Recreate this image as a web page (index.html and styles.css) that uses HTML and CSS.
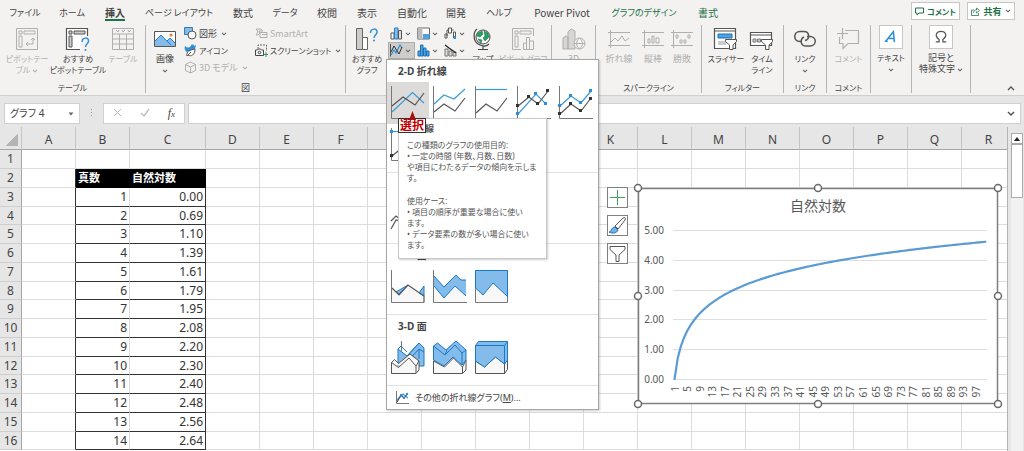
FILE: index.html
```html
<!DOCTYPE html>
<html lang="ja">
<head>
<meta charset="utf-8">
<title>グラフ 4</title>
<link rel="stylesheet" href="styles.css">
</head>
<body>
<svg class="defs" aria-hidden="true">
  <symbol id="chev" viewBox="0 0 6 4"><path d="M1 .8l2 2 2-2" fill="none" stroke="currentColor" stroke-width="1.1"/></symbol>
</svg>
<div class="app">
<header class="ribbon">
  <div class="topline">
    <nav class="tabs">
      <button class="kana">ファイル</button><button class="kana">ホーム</button><button class="active">挿入</button><button class="kana">ページ レイアウト</button><button>数式</button><button class="kana">データ</button><button>校閲</button><button>表示</button><button>自動化</button><button>開発</button><button class="kana">ヘルプ</button><button>Power Pivot</button><button class="context kana">グラフのデザイン</button><button class="context">書式</button>
    </nav>
    <div class="actions">
      <button class="kana"><svg width="9" height="9" viewBox="0 0 9 9"><path d="M.5 1h8v5H4L2 8V6H.5z" fill="none" stroke="currentColor"/></svg>コメント</button>
      <button><svg width="9" height="9" viewBox="0 0 9 9"><path d="M3 3H.5v5.500h7V6M2.500 6c0-2 1-3 3-3V1L8.500 3.500 5.500 6V4.500" fill="none" stroke="currentColor" stroke-width=".8"/></svg>共有 <svg class="chev"><use href="#chev"/></svg></button>
    </div>
  </div>
  <div class="groups">
    <section class="group g-table">
      <div class="tools">
        <button class="big kana" disabled><svg width="22" height="22" viewBox="0 0 22 22"><g fill="none" stroke="currentColor"><path d="M.5.5h21v21H.5zM3 3h3v3H3zM8 3h11v3H8zM3 8h3v11H3z"/><path d="M10 16h7v-6m-2 2 2-2 2 2m-7 2-2 2 2 2"/></g></svg><span>ピボットテー<br>ブル <svg class="chev"><use href="#chev"/></svg></span></button>
        <button class="big kana"><svg width="24" height="22" viewBox="0 0 24 22"><path d="M.5.5h21v21H.5z" fill="#fff"/><path d="M3 3h3v3H3zM8 3h11v3H8zM3 8h3v11H3z" fill="#ccc" stroke="#555"/><path d="M14 21.500H.5V.5h21V8" fill="none" stroke="#555" stroke-width="1.200"/><path d="M15 8h7v14h-7z" fill="#f3f2f1"/><path d="M16 14c0-5 7-5 6.500-1 0 3-3 3-3 6" fill="none" stroke="#2e8fd6" stroke-width="1.500"/><circle cx="19.500" cy="22" r="1" fill="#2e8fd6"/></svg><span>おすすめ<br>ピボットテーブル</span></button>
        <button class="big kana" disabled><svg width="22" height="22" viewBox="0 0 22 22"><path d="M.5.500h21v21H.5zM.5 6h21M.5 11h21M.5 16h21M7.500 6v15M14.500 6v15M4 2l2 2 1-2M10 2l1 2 2-2M16 2l1 2 2-2" fill="none" stroke="currentColor"/></svg><span>テーブル</span></button>
      </div>
      <h2>テーブル</h2>
    </section>
    <section class="group g-pict">
      <div class="tools">
        <button class="big"><svg width="22" height="22" viewBox="0 0 22 22"><path d="M.5 3.500h21v15H.5z" fill="#fff" stroke="#555"/><path d="M1 13l6-6 6 6 3-3 5 5v3H1z" fill="#83bbea"/><path d="M1 13l6-6 10 10m-4-4 3-3 5 5" fill="none" stroke="#2e7fbf"/><circle cx="17" cy="7" r="1.500" fill="#e8762c"/></svg><span>画像<br><svg class="chev"><use href="#chev"/></svg></span></button>
        <div class="small-list">
          <button><svg width="13" height="13" viewBox="0 0 13 13"><path d="M.5.5h8v7h-8z" fill="#83bbea" stroke="#2e7fbf"/><circle cx="8" cy="8" r="4" fill="#fff" stroke="#555"/></svg>図形 <svg class="chev"><use href="#chev"/></svg></button>
          <button class="kana"><svg width="13" height="13" viewBox="0 0 13 13"><path d="M1 2c2 2 4 2 6 0V1c2-1 3 0 3 1l2-1-1 4-4 3H3C1 7 0 5 1 2z" fill="#2e8fd6"/><path d="M3 12c-1-5 3-6 8-7 0 6-4 8-7 6zm0 0 4-4" fill="#fff" stroke="#555"/></svg>アイコン</button>
          <button disabled><svg width="13" height="13" viewBox="0 0 13 13"><path d="M6.500 1l5 2.500v6l-5 2.500-5-2.500v-6zM1.500 3.500l5 2.500 5-2.500M6.500 6v6" fill="none" stroke="currentColor"/></svg>3D モデル <svg class="chev"><use href="#chev"/></svg></button>
        </div>
        <div class="small-list">
          <button disabled><svg width="13" height="13" viewBox="0 0 13 13"><path d="M1 2h5l2 2H4l1 2-2 2H1l2-3zM5 5.500h7v5H5zM7 7.500h5" fill="none" stroke="currentColor"/></svg>SmartArt</button>
          <button class="kana"><svg width="13" height="13" viewBox="0 0 13 13"><path d="M3 5V1h8.500v6" fill="none" stroke="#666" stroke-dasharray="2 1"/><path d="M.5 6h2l1-1h2l1 1h2v5.500h-8z" fill="#fff" stroke="#444"/><circle cx="4.500" cy="8.500" r="1.300" fill="none" stroke="#444"/><path d="M11 8v5M8.800 10.500H13" stroke="#2e9b57"/></svg>スクリーンショット<svg class="chev"><use href="#chev"/></svg></button>
        </div>
      </div>
      <h2>図</h2>
    </section>
    <section class="group g-chart">
      <div class="tools">
        <button class="big kana"><svg width="22" height="22" viewBox="0 0 22 22"><path d="M.5.5h6v21h-6z" fill="#ccc" stroke="#666"/><path d="M6.500 9.500h5v12h-5z" fill="#fff" stroke="#666"/><path d="M14.500 5c0-5 7-5 6.500-1 0 3-3 3-3 6" fill="none" stroke="#2e8fd6" stroke-width="1.500"/><circle cx="18" cy="12.500" r="1" fill="#2e8fd6"/></svg><span>おすすめ<br>グラフ</span></button>
        <div class="chart-kinds">
          <button aria-label="縦棒"><svg width="13" height="13" viewBox="0 0 13 13"><path d="M1 6h3v6H1z" fill="#fff" stroke="#555"/><path d="M4.500 1h3.500v11H4.500z" fill="#83bbea" stroke="#2e7fbf"/><path d="M8.500 3.500h3V12h-3z" fill="#ddd" stroke="#555"/></svg><svg class="chev"><use href="#chev"/></svg></button>
          <button aria-label="階層"><svg width="13" height="13" viewBox="0 0 13 13"><path d="M.5 1h12v11H.5z" fill="#fff" stroke="#666"/><path d="M.5 1h5v11h-5z" fill="#bbb"/><path d="M6 7h6.500v5H6z" fill="#4fa3e0"/></svg><svg class="chev"><use href="#chev"/></svg></button>
          <button aria-label="ウォーターフォール"><svg width="13" height="13" viewBox="0 0 13 13"><path d="M1 7h2v4H1zM4.500 1h3v5h-3zM9.500 5h2v6h-2zM3 9V3h1.500M7.500 3h2" fill="#fff" stroke="#555"/><path d="M10 9h2v3h-2z" fill="#2e8fd6"/></svg><svg class="chev"><use href="#chev"/></svg></button>
          <button class="pressed" aria-label="折れ線"><svg width="13" height="13" viewBox="0 0 13 13"><path d="M.5 0v12.500" fill="none" stroke="#555"/><path d="M1 11l3-5 2 3 4-8 2 3" fill="none" stroke="#2e8fd6" stroke-width="1.200"/><path d="M1 8l3-6 5 8 3-7" fill="none" stroke="#333"/></svg><svg class="chev"><use href="#chev"/></svg></button>
          <button aria-label="統計"><svg width="13" height="13" viewBox="0 0 13 13"><path d="M1 7h2.500v5H1zM3.500 1H6v11H3.500zM6.500 4H9v8H6.500zM9.500 7H12v5H9.500z" fill="#4fa3e0" stroke="#1c6fb5"/></svg><svg class="chev"><use href="#chev"/></svg></button>
          <button aria-label="複合"><svg width="13" height="13" viewBox="0 0 13 13"><path d="M1 5h3v7H1zM5 7h3v5H5zM9 8h3v4H9z" fill="#ddd" stroke="#777"/><path d="M1 1l4 3 7 5" fill="none" stroke="#222" stroke-width="1.300"/></svg><svg class="chev"><use href="#chev"/></svg></button>
        </div>
        <button class="big kana"><svg width="22" height="22" viewBox="0 0 22 22"><circle cx="11" cy="9" r="7" fill="#fff" stroke="#444"/><path d="M6 5l4-2 1 3-3 3-3-1zM12 3l4 2 1 4-4 4-2-3 2-2zM6 11l4 1-1 3z" fill="#21a366" stroke="#217346" stroke-width=".6"/><path d="M5 1C1 4 1 13 6 16s9 2 11 0M11 18v3M6 21.500h10" fill="none" stroke="#444" stroke-width="1.200"/></svg><span>マップ</span></button>
        <button class="big kana" disabled><svg width="22" height="22" viewBox="0 0 22 22"><path d="M9 21.500H.5V.5h21V8M3 3h3v3H3zM8 3h11v3H8zM3 8h3v11H3zM11.500 15h3v6.500h-3zM14.500 9.500h3v12h-3zM17.500 13h4v8.500h-4z" fill="none" stroke="currentColor"/></svg><span>ピボットグラフ</span></button>
      </div>
    </section>
    <section class="group g-3d">
      <div class="tools">
        <button class="big" disabled><svg width="24" height="22" viewBox="0 0 24 22"><path d="M1 10l3-2 2 1v12H1zM6 4l3-3 4 2v18H6z" fill="#d8d6d4" stroke="currentColor"/><circle cx="17.500" cy="15.500" r="5.500" fill="#f3f2f1" stroke="currentColor"/><path d="M12 15.500h11M17.500 10c-4 4-4 7 0 11 4-4 4-7 0-11" fill="none" stroke="currentColor"/></svg><span>3D</span></button>
      </div>
    </section>
    <section class="group g-spark">
      <div class="tools">
        <button class="big" disabled><svg width="22" height="22" viewBox="0 0 22 22"><path d="M0 4.500h22M0 17.500h22M2.500 2v18M3 14l4-4 3 3 4-5 3 5 4-3" fill="none" stroke="currentColor"/></svg><span>折れ線</span></button>
        <button class="big" disabled><svg width="22" height="22" viewBox="0 0 22 22"><path d="M0 4.500h22M0 17.500h22M2.500 2v18M6 11h2v4H6zM10 8h2v7h-2zM14 10h3v5h-3z" fill="none" stroke="currentColor"/></svg><span>縦棒</span></button>
        <button class="big" disabled><svg width="22" height="22" viewBox="0 0 22 22"><path d="M0 4.500h22M0 17.500h22M2.500 2v18M5 7h2v3H5zM9 12h2v3H9zM13 12h2v3h-2zM17 7h2v3h-2z" fill="none" stroke="currentColor"/></svg><span>勝敗</span></button>
      </div>
      <h2>スパークライン</h2>
    </section>
    <section class="group g-filter">
      <div class="tools">
        <button class="big kana"><svg width="24" height="22" viewBox="0 0 24 22"><path d="M.5.500h21v20H.5zM.5 3h21" fill="#fff" stroke="#555" stroke-width="1.200"/><path d="M4 6h14v4H4z" fill="#4fa3e0" stroke="#1c6fb5"/><path d="M4 13h8v4H4z" fill="#ccc"/><path d="M11.500 11.500h11v2L19 17v4.500h-3.500V17l-4-3.500z" fill="#fff" stroke="#555"/></svg><span>スライサー</span></button>
        <button class="big kana"><svg width="24" height="22" viewBox="0 0 24 22"><path d="M.5 4.500h21v13H.5zM.5 7h21" fill="#fff" stroke="#555" stroke-width="1.200"/><path d="M3 11h3v3H3zM7.500 11h3v3h-3z" fill="#ccc" stroke="#777"/><path d="M11.500 11.500h11v2L19 17v4.500h-3.500V17l-4-3.500z" fill="#fff" stroke="#555"/></svg><span>タイム<br>ライン</span></button>
      </div>
      <h2>フィルター</h2>
    </section>
    <section class="group g-link">
      <div class="tools">
        <button class="big kana"><svg width="22" height="22" viewBox="0 0 22 22"><path d="M8 13.500H6C-1 13.500-1 3.500 6 3.500h4c6 0 6 8 1 9M13 8.500h3c7 0 7 9.500 0 9.500h-4c-6 0-6-7-2-9" fill="none" stroke="#555" stroke-width="1.500"/></svg><span>リンク<br><svg class="chev"><use href="#chev"/></svg></span></button>
      </div>
      <h2>リンク</h2>
    </section>
    <section class="group g-comment">
      <div class="tools">
        <button class="big kana" disabled><svg width="22" height="22" viewBox="0 0 22 22"><path d="M8 2.500h13.500v13H11l-5 5v-5H2.500V9M5.500 0v11M0 5.500h11" fill="none" stroke="currentColor" stroke-width="1.200"/></svg><span>コメント</span></button>
      </div>
      <h2>コメント</h2>
    </section>
    <section class="group g-text">
      <div class="tools">
        <button class="big kana boxed"><svg class="framed" width="24" height="24" viewBox="0 0 23 23"><path d="M6 16L14 6l1 11M9 13h6M5 16h3" fill="none" stroke="#2e8fd6" stroke-width="1.600"/></svg><span>テキスト<br><svg class="chev"><use href="#chev"/></svg></span></button>
      </div>
    </section>
    <section class="group g-symbol">
      <div class="tools">
        <button class="big boxed"><svg class="framed" width="24" height="24" viewBox="0 0 23 23"><path d="M6 16.500h3.500V14C4 10 7 5.500 11.500 5.500S19 10 13.500 14v2.500H17" fill="none" stroke="#555" stroke-width="1.300"/></svg><span>記号と<br>特殊文字 <svg class="chev"><use href="#chev"/></svg></span></button>
      </div>
    </section>
    <button class="collapse" aria-label="リボンを折りたたむ"><svg width="8" height="5" viewBox="0 0 8 5"><path d="M1 4l3-3 3 3" fill="none" stroke="#555" stroke-width="1.300"/></svg></button>
  </div>
</header>

<div class="formula-bar">
  <button class="name-box">グラフ 4<svg width="6" height="4" viewBox="0 0 6 4"><path d="M.5.500h5L3 3.500z" fill="#666"/></svg></button>
  <svg class="grip" width="3" height="9" viewBox="0 0 3 9"><path d="M1 0h1v1H1zM1 3h1v1H1zM1 6h1v1H1z" fill="#999"/></svg>
  <div class="fx">
    <button aria-label="キャンセル"><svg width="9" height="9" viewBox="0 0 9 9"><path d="M1 1l7 7M8 1L1 8" stroke="#bbb"/></svg></button>
    <button aria-label="入力"><svg width="10" height="9" viewBox="0 0 10 9"><path d="M1 5l3 3 5-7" fill="none" stroke="#bbb" stroke-width="1.300"/></svg></button>
    <button aria-label="関数の挿入"><i>f</i><i class="sub">x</i></button>
  </div>
  <label class="formula"><input type="text" aria-label="数式バー"><svg width="8" height="5" viewBox="0 0 8 5"><path d="M1 1l3 3 3-3" fill="none" stroke="#555" stroke-width="1.500"/></svg></label>
</div>

<main class="workspace">
  <div class="sheet">
    <table class="grid">
      <colgroup id="cols"></colgroup>
      <thead><tr id="head"></tr></thead>
      <tbody id="rows"></tbody>
    </table>
    <div class="chart-object">
      <div class="chart-tools">
        <button aria-label="グラフ要素"><svg width="19" height="19" viewBox="0 0 19 19"><path d="M9.500 2v15M2 9.500h15" stroke="#3fa45f"/></svg></button>
        <button aria-label="グラフ スタイル"><svg width="19" height="19" viewBox="0 0 19 19"><path d="M7 10l8-8c2-1 3 0 2 2l-7 9z" fill="#fff" stroke="#555"/><path d="M1 16c3 0 2-5 6-5l3 3c-1 3-5 4-9 2z" fill="#6fb1e8" stroke="#1c6fb5"/></svg></button>
        <button aria-label="グラフ フィルター"><svg width="19" height="19" viewBox="0 0 19 19"><path d="M2 2.500h15v3l-6 5.500v6.500H8V11L2 5.500z" fill="#fff" stroke="#555"/></svg></button>
      </div>
      <svg id="chart" class="chart" viewBox="0 0 360 216" role="img" aria-label="自然対数"></svg>
    </div>
  </div>
  <div class="scrollbar">
    <button aria-label="上へ"><svg width="6" height="4" viewBox="0 0 6 4"><path d="M0 4l3-4 3 4z" fill="#222"/></svg></button>
    <div class="thumb"></div>
  </div>
</main>

<div class="menu" role="menu">
  <section>
    <h3>2-D 折れ線</h3>
    <div class="gallery">
      <button class="selected"><svg width="34" height="34" viewBox="0 0 34 34"><path d="M.5 0v32.500H34" class="ax"/><path d="M1 26l20.500-19.500L33 17" class="bl"/><path d="M1 20l11-9 12 8 9-12" class="gl"/></svg></button>
      <button><svg width="34" height="34" viewBox="0 0 34 34"><path d="M.5 0v32.500H34" class="ax"/><path d="M1 18l10-9 10 4L32 3" class="bl"/><path d="M1 26l10-8 11 7 10-13" class="gl"/></svg></button>
      <button><svg width="34" height="34" viewBox="0 0 34 34"><path d="M.5 0v32.500H34" class="ax"/><path d="M1 3.500h31" class="bl"/><path d="M1 27l10-9 11 7 10-13" class="gl"/></svg></button>
      <button><svg width="34" height="34" viewBox="0 0 34 34"><path d="M.5 0v32.500H34" class="ax"/><path d="M1 28l18-20 10 10" class="bl"/><path d="M1 20l11-9 9 7L31 5" class="gl"/><path d="M-1 26h3v3h-3zM17 6h3v3h-3zM27 16h3v3h-3z" fill="#2e8fd6"/><path d="M-1 18h3v3h-3zM10 9h3v3h-3zM19 16h3v3h-3zM29 3h3v3h-3z" fill="#333"/></svg></button>
      <button><svg width="34" height="34" viewBox="0 0 34 34"><path d="M.5 0v32.500H34" class="ax"/><path d="M1 20l11-10 10 7L32 5" class="bl"/><path d="M1 28l11-10 10 7 10-13" class="gl"/><path d="M-1 18h3v3h-3zM10 8h3v3h-3zM20 15h3v3h-3zM30 3h3v3h-3z" fill="#2e8fd6"/><path d="M-1 26h3v3h-3zM10 16h3v3h-3zM20 23h3v3h-3zM30 11h3v3h-3z" fill="#333"/></svg></button>
      <button><svg width="34" height="34" viewBox="0 0 34 34"><path d="M.5 0v32.500H34" class="ax"/><path d="M1 3.500h31" class="bl"/><path d="M1 28l11-9 10 7 10-13" class="gl"/><path d="M-1 2h3v3h-3z" fill="#2e8fd6"/><path d="M-1 26h3v3h-3z" fill="#333"/></svg></button>
    </div>
  </section>
  <section aria-label="3-D 折れ線">
    <h3></h3>
    <div class="gallery">
      <button><svg width="34" height="34" viewBox="0 0 34 34"><path d="M0 22l5-5 10 8 13-10v6L20 31 10 22 5 21 0 30" class="gl"/></svg></button>
    </div>
  </section>
  <section>
    <h3>2-D 面</h3>
    <div class="gallery">
      <button><svg width="34" height="34" viewBox="0 0 34 34"><path d="M1 18l7 7 9-10 16 11v6H1z" fill="#f8f8f8"/><path d="M5 22l12-7-9 9zM28 23l5-7v10z" class="area"/><path d="M1 18l7 7 9-10 16 11v6.500" class="gl"/><path d="M.5 0v32.500H33" class="ax"/></svg></button>
      <button><svg width="34" height="34" viewBox="0 0 34 34"><path d="M1 16l10 11 11-11 10 10v6H1z" fill="#f8f8f8"/><path d="M1 6l10 11L23 5l5 5h5v16L22 16 11 28 1 16z" fill="#83bbea"/><path d="M1 6l10 11L23 5l5 5h5M33 26L22 16 11 28 1 16" fill="none" stroke="#1c79c5"/><path d="M.5 0v32.500H34" class="ax"/></svg></button>
      <button><svg width="34" height="34" viewBox="0 0 34 34"><path d="M.5.500h32v32H.5z" fill="#f8f8f8" stroke="#777"/><path d="M.5.500h32v26L18 13 8 25l-7.500-7z" class="area"/></svg></button>
    </div>
  </section>
  <section>
    <h3>3-D 面</h3>
    <div class="gallery">
      <button><svg width="34" height="34" viewBox="0 0 34 34"><path d="M10.500 0v10" class="ax"/><path d="M7 8l9 7L28 2l5 5v18H7z" class="area"/><path d="M16 15L28 2M17 20L28 8l5 3M28 8v10M7 8l3-3 6 6" fill="none" stroke="#1c79c5"/><path d="M.5 21.500l3-3 4 4L19 13l9 7v9l-3 3.500H.5zM.5 21.500l7 5L18 17l7 8v7M25 25l3-5" fill="#f8f8f8" stroke="#555"/></svg></button>
      <button><svg width="34" height="34" viewBox="0 0 34 34"><path d="M.5 20l11 6 9-9 9 9 3.500-7v10l-3.500 3.500H.5zM29.500 26v6" fill="#f8f8f8" stroke="#555"/><path d="M.5 5l4-3L13 9l10-9 10 9v10l-4 5-9-8-9 9L.5 19z" class="area"/><path d="M.5 5L12 14l10-10 7 8v12M29 12l4-3M12 14l2-5" fill="none" stroke="#1c79c5"/></svg></button>
      <button><svg width="34" height="34" viewBox="0 0 34 34"><path d="M.5 20l9 6 11-10 9 7v9.500H.5zM29.500 32.500l3-4V17l-3 6z" fill="#f8f8f8" stroke="#555"/><path d="M.5 4.500l3-4h29V19l-3 4-9-7-11 10-9-6z" class="area"/><path d="M.5 4.500h29V23M29.500 4.500l3-4" fill="none" stroke="#1c79c5"/></svg></button>
    </div>
  </section>
  <button class="more"><svg width="13" height="13" viewBox="0 0 13 13"><path d="M.5 0v12.500H13" class="ax"/><path d="M1 9l6-6 5 4" class="bl"/><path d="M1 11l4-7 3 3 4-5" class="gl"/><path d="M4 3h2v2H4zM7 6h2v2H7zM10 2h2v2h-2z" fill="#2e8fd6"/></svg><span>その他の折れ線グラフ(<u>M</u>)...</span></button>
  <div class="tip" role="tooltip">
    <strong>折れ線</strong>
    <p>この種類のグラフの使用目的:<br>• 一定の時間 (年数、月数、日数)<br>や項目にわたるデータの傾向を示しま<br>す。</p>
    <p>使用ケース:<br>• 項目の順序が重要な場合に使い<br>ます。<br>• データ要素の数が多い場合に使い<br>ます。</p>
    <div class="callout"><svg width="7" height="9" viewBox="0 0 7 9"><path d="M3.500 0L7 9H0z" fill="#a80f0f"/></svg>選択</div>
  </div>
</div>
</div>
<script src="app.js"></script>
</body>
</html>
```

FILE: styles.css
```css
* { box-sizing: border-box; }
html, body { margin: 0; height: 100%; overflow: hidden; }
body {
  font-family: "Noto Sans", "Noto Sans CJK JP", sans-serif;
  font-size: 9px;
  line-height: 11px;
  color: #444;
  background: #e6e6e6;
}
button {
  font: inherit;
  color: inherit;
  background: none;
  border: 0;
  padding: 0;
  margin: 0;
  white-space: nowrap;
}
button:disabled { color: #b1afad; }
h2, h3, p { margin: 0; font-size: inherit; font-weight: 400; }
svg { flex: none; overflow: visible; }
.defs { position: absolute; width: 0; height: 0; }
.chev { width: 6px; height: 4px; vertical-align: middle; color: #666; }
:disabled .chev { color: #b1afad; }
.kana { font-size: 8px; }

.app { position: relative; display: flex; flex-direction: column; height: 100vh; }

.ribbon {
  background: #f3f2f1;
  border-bottom: 1px solid #d2d0ce;
  font-feature-settings: "palt";
  font-family: "Noto Sans CJK JP", sans-serif;
}
.topline { display: flex; justify-content: space-between; height: 25px; }
.tabs {
  display: grid;
  grid-template-columns: 46px 48px 38px 90px 38px 46px 38px 42px 48px 40px 46px 80px 84px 44px;
  padding-left: 2px;
  font-size: 10px;
}
.tabs button { display: flex; justify-content: center; align-items: center; }
.tabs .kana { font-size: 9px; }
.tabs .active {
  font-weight: 700;
  background: linear-gradient(#1e7145, #1e7145) center 19px / 20px 2px no-repeat;
}
.tabs .context { color: #217346; }
.actions { display: flex; gap: 7px; padding: 2px 9px 5px 0; }
.actions button {
  display: flex;
  justify-content: space-between;
  align-items: center;
  min-width: 48px;
  gap: 3px;
  padding: 0 3px;
  background: #fff;
  border: 1px solid #c8c6c4;
  color: #217346;
  font-weight: 700;
}

.groups { display: flex; height: 70px; padding-bottom: 2px; }
.group {
  display: flex;
  flex-direction: column;
  justify-content: space-between;
  flex: none;
  border-right: 1px solid #b8b6b4;
}
.group h2 { text-align: center; font-size: 8px; }
.group.g-pict h2 { font-size: 9px; }
.tools { display: grid; grid-auto-flow: column; justify-content: start; align-items: start; }
.big { display: flex; flex-direction: column; align-items: center; gap: 3px; padding-top: 3px; justify-self: center; }
.boxed { padding-top: 0; }
.framed { background: #fff; border: 1px solid #c8c6c4; }
.g-table { width: 146px; }
.g-table .tools { grid-template-columns: 54px 48px 42px; }
.g-pict { width: 200px; }
.g-pict .tools { grid-template-columns: 38px 71px 88px; }
.g-chart { width: 206px; }
.g-chart .tools { grid-template-columns: 42px 80px 30px 50px; }
.g-3d { width: 44px; }
.g-spark { width: 106px; }
.g-spark .tools { grid-template-columns: 42px 26px 32px; padding-left: 2px; }
.g-filter { width: 82px; }
.g-filter .tools { grid-template-columns: 48px 24px; }
.g-link { width: 43px; }
.g-comment { width: 44px; }
.g-text { width: 41px; }
.g-symbol { width: 59px; }
.g-3d .tools, .g-link .tools, .g-comment .tools, .g-text .tools, .g-symbol .tools { justify-content: center; }
.small-list { display: grid; grid-auto-rows: 17px; }
.small-list button { display: flex; align-items: center; gap: 2px; }
.small-list .chev { margin-left: 2px; }
.chart-kinds { display: grid; grid-template-columns: repeat(3, 27px); grid-auto-rows: 17px; }
.chart-kinds button { display: flex; align-items: center; gap: 2px; padding: 0 3px 0 2px; }
.chart-kinds .pressed { background: #cfcdcb; border: 1px solid #b0aeac; padding-left: 1px; }
.collapse { align-self: end; margin-left: auto; padding: 0 9px 0 0; }

.formula-bar {
  display: flex;
  align-items: center;
  padding: 7px 3px 3px 4px;
  height: 31px;
  font-size: 10px;
}
.formula-bar > * { height: 21px; }
.name-box {
  display: flex;
  align-items: center;
  justify-content: space-between;
  width: 76px;
  padding: 0 5px;
  background: #fff;
  border: 1px solid #d0d0d0;
  font-feature-settings: "palt";
}
.formula-bar > .grip { height: 9px; margin: 0 10px; }
.fx {
  display: flex;
  justify-content: space-around;
  align-items: center;
  width: 82px;
  margin-right: 3px;
  background: #fff;
  border: 1px solid #d0d0d0;
}
.fx i { font-family: "Liberation Serif", serif; font-size: 12px; }
.fx .sub { font-size: 9px; }
.formula {
  flex: 1;
  display: flex;
  align-items: center;
  padding-right: 5px;
  background: #fff;
  border: 1px solid #d0d0d0;
}
.formula input { flex: 1; min-width: 0; border: 0; outline: 0; background: none; font: inherit; }

.workspace { flex: 1; min-height: 0; display: flex; gap: 3px; padding-right: 1px; }
.sheet { flex: 1; min-width: 0; position: relative; overflow: hidden; background: #fff; border-right: 1px solid #b4b4b4; }
.grid {
  width: 1016px;
  table-layout: fixed;
  border-collapse: separate;
  border-spacing: 0;
  font-size: 12px;
  line-height: 16px;
}
.grid .col { width: 54px; }
.grid .col-row { width: 22px; }
.grid .col-wide { width: 76px; }
.grid th, .grid td {
  height: 19px;
  padding: 0 2px;
  border-right: 1px solid #dcdcdc;
  border-bottom: 1px solid #dcdcdc;
  text-align: right;
}
.grid tbody tr:nth-child(4n) > * { height: 18px; }
.grid th { background: #e6e6e6; font-weight: 400; text-align: center; }
.grid thead th { height: 23px; padding-top: 3px; border-right-color: #c4c4c4; border-bottom-color: #a6a6a6; }
.grid tbody th { border-right-color: #a6a6a6; border-bottom-color: #cfcfcf; }
.grid .corner { background: linear-gradient(135deg, transparent 50%, #b4b4b4 50%) right 3px bottom 3px / 12px 12px no-repeat #e6e6e6; }
.grid .edge { border-right-color: #333; }
.grid .value { border-bottom-color: #333; color: #333; }
.grid .title {
  background: #000;
  border-color: #000;
  color: #fff;
  font-size: 11px;
  font-weight: 700;
  text-align: left;
}

.chart-object { position: absolute; left: 638px; top: 61px; width: 360px; }
.chart { display: block; width: 100%; }
.chart text { fill: #595959; font-size: 10px; }
.chart .chart-title { font-size: 14px; }
.chart-tools { position: absolute; right: 370px; top: -1px; display: grid; gap: 7px; }
.chart-tools button { display: grid; background: #fff; border: 1px solid #808080; }

.scrollbar { width: 12px; padding-top: 6px; background: linear-gradient(#e6e6e6 6px, #f1f1f1 6px); }
.scrollbar button { display: grid; place-items: center; width: 12px; height: 11px; background: #fff; border: 1px solid #ababab; }
.thumb { height: 54px; background: #fff; border: 1px solid #ababab; }

.menu {
  position: absolute;
  left: 386px;
  top: 59px;
  width: 213px;
  background: #fff;
  border: 1px solid #a6a6a6;
  box-shadow: 1px 1px 2px #0003;
}
.menu section { border-bottom: 1px solid #e1e1e1; padding-bottom: 6px; }
.menu h3 { height: 22px; padding: 0 11px; line-height: 22px; font-size: 10px; font-weight: 700; }
.gallery { display: grid; grid-template-columns: repeat(5, 42px); grid-auto-rows: 42px; }
.gallery button { display: grid; place-items: center; }
.gallery .selected { background: #dddbd9; }
.ax { fill: none; stroke: #777; }
.bl { fill: none; stroke: #3a9ad9; stroke-width: 1.2; }
.gl { fill: none; stroke: #555; stroke-width: 1.2; }
.area { fill: #83bbea; stroke: #1c79c5; }
.more {
  display: flex;
  align-items: center;
  gap: 6px;
  width: 100%;
  height: 23px;
  padding-left: 9px;
  font-size: 9px;
  font-feature-settings: "palt";
}
.tip {
  position: absolute;
  left: 11px;
  top: 58px;
  width: 149px;
  padding: 4px 8px 8px;
  background: #fff;
  border: 1px solid #c8c8c8;
  box-shadow: 1px 1px 2px #0003;
  color: #555;
  font-size: 8px;
  white-space: nowrap;
  font-feature-settings: "palt";
}
.tip strong { display: block; margin-bottom: 5px; font-size: 9px; }
.tip p + p { margin-top: 12px; }
.callout {
  position: absolute;
  left: -1px;
  top: -1px;
  padding: 0 1px;
  background: #fff;
  border: 1px solid #333;
  color: #c00000;
  font-size: 12px;
  line-height: 13px;
  font-weight: 700;
}
.callout svg { position: absolute; left: 10px; top: -8px; }
```

FILE: app.js
```js
const columns = "ABCDEFGHIJKLMNOPQR".split("");
const rowCount = 16;

document.getElementById("cols").innerHTML =
  '<col class="col-row">' +
  columns.map(c => `<col class="${c === "C" ? "col-wide" : "col"}">`).join("");

document.getElementById("head").innerHTML =
  '<th class="corner"></th>' + columns.map(c => `<th scope="col">${c}</th>`).join("");

function cell(column, row) {
  const inTable = row >= 2;
  if (!inTable || !"ABC".includes(column)) return "<td></td>";
  if (column === "A") return '<td class="edge"></td>';
  if (row === 2) return `<td class="title">${column === "B" ? "真数" : "自然対数"}</td>`;
  const n = row - 2;
  return column === "B"
    ? `<td class="value">${n}</td>`
    : `<td class="value edge">${Math.log(n).toFixed(2)}</td>`;
}

let rows = "";
for (let r = 1; r <= rowCount; r++) {
  rows += `<tr><th scope="row">${r}</th>${columns.map(c => cell(c, r)).join("")}</tr>`;
}
document.getElementById("rows").innerHTML = rows;

const plot = { left: 35, right: 349, top: 42, bottom: 191, max: 5, count: 100 };
const step = (plot.right - plot.left) / plot.count;
const x = n => plot.left + (n - 0.5) * step;
const y = v => plot.bottom - (v / plot.max) * (plot.bottom - plot.top);

let art = '<rect x="0.5" y="0.5" width="359" height="215" fill="#fff" stroke="#7f7f7f" stroke-width="1.5"/>';
art += '<text class="chart-title" x="180" y="23" text-anchor="middle">自然対数</text>';
for (let v = 0; v <= plot.max; v++) {
  art += `<path d="M${plot.left} ${Math.round(y(v)) + 0.5}H${plot.right}" stroke="#dedede"/>`;
  art += `<text x="26" y="${Math.round(y(v)) + 4}" text-anchor="end">${v.toFixed(2)}</text>`;
}
for (let n = 1; n <= 97; n += 4) {
  art += `<text transform="translate(${x(n) + 4} 198) rotate(-90)" text-anchor="end">${n}</text>`;
}
const points = Array.from({ length: plot.count }, (_, i) => `${x(i + 1)},${y(Math.log(i + 1))}`);
art += `<polyline points="${points.join(" ")}" fill="none" stroke="#5b9bd5" stroke-width="2.2" stroke-linecap="round" stroke-linejoin="round"/>`;
for (const [hx, hy] of [[0, 0], [180, 0], [360, 0], [0, 108], [360, 108], [0, 216], [180, 216], [360, 216]]) {
  art += `<circle cx="${hx}" cy="${hy}" r="3.500" fill="#fff" stroke="#6a6a6a" stroke-width="1.5"/>`;
}
document.getElementById("chart").innerHTML = art;
```
